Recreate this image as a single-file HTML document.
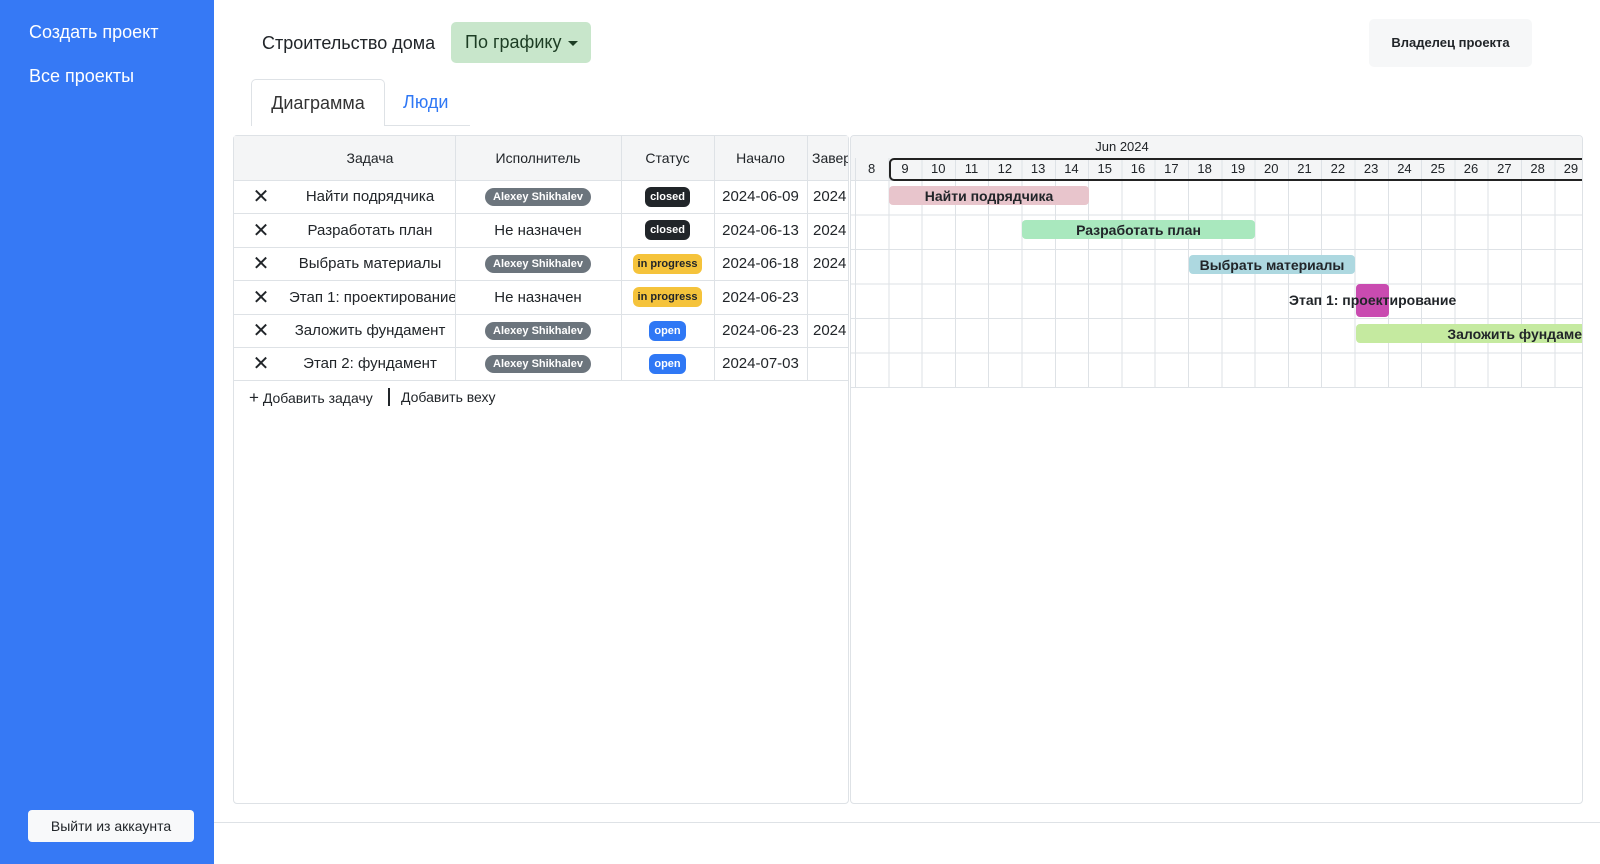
<!DOCTYPE html>
<html><head><meta charset="utf-8"><style>
*{box-sizing:border-box;margin:0;padding:0}
body{width:1600px;height:864px;position:relative;background:#fff;font-family:"Liberation Sans","Noto Sans CJK SC",sans-serif;color:#212529;overflow:hidden}
.abs{position:absolute}
.side{left:0;top:0;width:214px;height:864px;background:#3679f5}
.side a{position:absolute;left:29px;color:#fff;font-size:18px}
.logout{left:28px;top:810px;width:166px;height:32px;background:#f8f9fa;border-radius:4px;font-size:14px;text-align:center;line-height:32px;color:#212529}
.t{position:absolute;display:flex;align-items:center;justify-content:center;font-size:15px;white-space:nowrap;overflow:hidden}
.b{font-size:11px;font-weight:bold;color:#fff;border-radius:6px;padding:4px 5px;line-height:12px}
.gray{background:#6c757d;border-radius:9px;padding:3px 8px}
.dark{background:#212529}
.warn{background:#f5c33b;color:#212529}
.blue{background:#2f78f5}
.hl{position:absolute;height:1px;background:#dee2e6}
.vl{position:absolute;width:1px;background:#dee2e6}
.bar{position:absolute;height:19px;border-radius:4px;font-size:14px;font-weight:bold;display:flex;align-items:center;justify-content:center;white-space:nowrap;overflow:hidden}
.day{position:absolute;top:158px;height:22px;width:33.3px;text-align:center;font-size:13px;line-height:22px}
</style></head><body>
<div class="abs side">
<a style="top:22px">Создать проект</a>
<a style="top:66px">Все проекты</a>
<div class="abs logout">Выйти из аккаунта</div>
</div>
<div class="hl" style="left:214px;top:822px;width:1386px"></div>

<div class="abs" style="left:262px;top:33px;font-size:18px">Строительство дома</div>
<div class="abs" style="left:451px;top:22px;width:140px;height:41px;background:#c8e6cb;border-radius:5px;font-size:18px;color:#1d3d24;line-height:41px;padding-left:14px">По графику <span style="display:inline-block;border-left:5px solid transparent;border-right:5px solid transparent;border-top:5px solid #1d3d24;vertical-align:middle;margin-left:2px"></span></div>
<div class="abs" style="left:1369px;top:19px;width:163px;height:48px;background:#f6f7f8;border-radius:5px;font-size:13px;font-weight:bold;text-align:center;line-height:48px">Владелец проекта</div>

<div class="abs" style="left:251px;top:79px;width:134px;height:47px;border:1px solid #dee2e6;border-bottom:none;border-radius:5px 5px 0 0;background:#fff;font-size:18px;text-align:center;line-height:46px;color:#333">Диаграмма</div>
<div class="abs" style="left:403px;top:92px;font-size:18px;color:#2f78f5">Люди</div>
<div class="hl" style="left:385px;top:125px;width:85px"></div>

<div class="abs" style="left:233px;top:135px;width:616px;height:669px;border:1px solid #dee2e6;border-radius:4px"></div>
<div class="abs" style="left:234px;top:136px;width:614px;height:44px;background:#f4f5f6"></div>
<div class="vl" style="left:455px;top:136px;height:244px"></div>
<div class="vl" style="left:621px;top:136px;height:244px"></div>
<div class="vl" style="left:714px;top:136px;height:244px"></div>
<div class="vl" style="left:807px;top:136px;height:244px"></div>
<div class="t" style="left:285px;top:136px;width:170px;height:44px;font-size:14px">Задача</div>
<div class="t" style="left:455px;top:136px;width:166px;height:44px;font-size:14px">Исполнитель</div>
<div class="t" style="left:621px;top:136px;width:93px;height:44px;font-size:14px">Статус</div>
<div class="t" style="left:714px;top:136px;width:93px;height:44px;font-size:14px">Начало</div>
<div class="t" style="left:812px;top:136px;width:36px;height:44px;font-size:14px;justify-content:flex-start">Завершение</div>

<div class="hl" style="left:234px;top:180px;width:614px"></div>
<div class="hl" style="left:234px;top:213px;width:614px"></div>
<div class="hl" style="left:234px;top:247px;width:614px"></div>
<div class="hl" style="left:234px;top:280px;width:614px"></div>
<div class="hl" style="left:234px;top:314px;width:614px"></div>
<div class="hl" style="left:234px;top:347px;width:614px"></div>
<div class="hl" style="left:234px;top:380px;width:614px"></div>

<div class="t" style="left:245px;top:180px;width:32px;height:33px;font-size:20px">✕</div>
<div class="t" style="left:285px;top:180px;width:170px;height:33px">Найти подрядчика</div>
<div class="t" style="left:455px;top:180px;width:166px;height:33px"><span class="b gray">Alexey Shikhalev</span></div>
<div class="t" style="left:621px;top:180px;width:93px;height:33px"><span class="b dark">closed</span></div>
<div class="t" style="left:714px;top:180px;width:93px;height:33px">2024-06-09</div>
<div class="t" style="left:813px;top:180px;width:35px;height:33px;justify-content:flex-start">2024</div>

<div class="t" style="left:245px;top:213px;width:32px;height:34px;font-size:20px">✕</div>
<div class="t" style="left:285px;top:213px;width:170px;height:34px">Разработать план</div>
<div class="t" style="left:455px;top:213px;width:166px;height:34px">Не назначен</div>
<div class="t" style="left:621px;top:213px;width:93px;height:34px"><span class="b dark">closed</span></div>
<div class="t" style="left:714px;top:213px;width:93px;height:34px">2024-06-13</div>
<div class="t" style="left:813px;top:213px;width:35px;height:34px;justify-content:flex-start">2024</div>

<div class="t" style="left:245px;top:247px;width:32px;height:33px;font-size:20px">✕</div>
<div class="t" style="left:285px;top:247px;width:170px;height:33px">Выбрать материалы</div>
<div class="t" style="left:455px;top:247px;width:166px;height:33px"><span class="b gray">Alexey Shikhalev</span></div>
<div class="t" style="left:621px;top:247px;width:93px;height:33px"><span class="b warn">in progress</span></div>
<div class="t" style="left:714px;top:247px;width:93px;height:33px">2024-06-18</div>
<div class="t" style="left:813px;top:247px;width:35px;height:33px;justify-content:flex-start">2024</div>

<div class="t" style="left:245px;top:280px;width:32px;height:34px;font-size:20px">✕</div>
<div class="t" style="left:289px;top:280px;width:166px;height:34px;justify-content:flex-start">Этап 1: проектирование</div>
<div class="t" style="left:455px;top:280px;width:166px;height:34px">Не назначен</div>
<div class="t" style="left:621px;top:280px;width:93px;height:34px"><span class="b warn">in progress</span></div>
<div class="t" style="left:714px;top:280px;width:93px;height:34px">2024-06-23</div>

<div class="t" style="left:245px;top:314px;width:32px;height:33px;font-size:20px">✕</div>
<div class="t" style="left:285px;top:314px;width:170px;height:33px">Заложить фундамент</div>
<div class="t" style="left:455px;top:314px;width:166px;height:33px"><span class="b gray">Alexey Shikhalev</span></div>
<div class="t" style="left:621px;top:314px;width:93px;height:33px"><span class="b blue">open</span></div>
<div class="t" style="left:714px;top:314px;width:93px;height:33px">2024-06-23</div>
<div class="t" style="left:813px;top:314px;width:35px;height:33px;justify-content:flex-start">2024</div>

<div class="t" style="left:245px;top:347px;width:32px;height:33px;font-size:20px">✕</div>
<div class="t" style="left:285px;top:347px;width:170px;height:33px">Этап 2: фундамент</div>
<div class="t" style="left:455px;top:347px;width:166px;height:33px"><span class="b gray">Alexey Shikhalev</span></div>
<div class="t" style="left:621px;top:347px;width:93px;height:33px"><span class="b blue">open</span></div>
<div class="t" style="left:714px;top:347px;width:93px;height:33px">2024-07-03</div>

<div class="abs" style="left:249px;top:388px;font-size:14px"><span style="font-size:17px">+</span> Добавить задачу</div>
<div class="abs" style="left:388px;top:388px;width:2px;height:18px;background:#212529"></div>
<div class="abs" style="left:401px;top:389px;font-size:14px">Добавить веху</div>

<div class="abs" style="left:850px;top:135px;width:733px;height:669px;border:1px solid #dee2e6;border-radius:4px;overflow:hidden">
 <div class="abs" style="left:0;top:0;width:733px;height:45px;background:#f4f5f6"></div>
 <div class="abs" style="left:4px;top:22px;width:729px;height:230px;background:repeating-linear-gradient(90deg,#dee2e6 0 1px,transparent 1px 33.3px)"></div>
 <div class="abs" style="left:0;top:44px;width:733px;height:208px;background:repeating-linear-gradient(180deg,#dee2e6 0 1px,transparent 1px 34.5px)"></div>
 <div class="abs" style="left:0;top:251px;width:733px;height:1px;background:#dee2e6"></div>
 <div class="abs" style="left:38px;top:22px;width:700px;height:23px;border:2px solid #222;border-radius:5px"></div>
 <div class="abs" style="left:221px;top:1px;width:100px;text-align:center;font-size:13px;line-height:20px">Jun 2024</div>
</div>
<div class="day" style="left:855px">8</div><div class="day" style="left:888.3px">9</div><div class="day" style="left:921.6px">10</div><div class="day" style="left:954.9px">11</div><div class="day" style="left:988.2px">12</div><div class="day" style="left:1021.5px">13</div><div class="day" style="left:1054.8px">14</div><div class="day" style="left:1088.1px">15</div><div class="day" style="left:1121.4px">16</div><div class="day" style="left:1154.7px">17</div><div class="day" style="left:1188px">18</div><div class="day" style="left:1221.3px">19</div><div class="day" style="left:1254.6px">20</div><div class="day" style="left:1287.9px">21</div><div class="day" style="left:1321.2px">22</div><div class="day" style="left:1354.5px">23</div><div class="day" style="left:1387.8px">24</div><div class="day" style="left:1421.1px">25</div><div class="day" style="left:1454.4px">26</div><div class="day" style="left:1487.7px">27</div><div class="day" style="left:1521px">28</div><div class="day" style="left:1554.3px">29</div>

<div class="bar" style="left:889px;top:186px;width:200px;background:#e8c5cc">Найти подрядчика</div>
<div class="bar" style="left:1022px;top:220px;width:233px;background:#a9e8be">Разработать план</div>
<div class="bar" style="left:1189px;top:255px;width:166px;background:#add8e0">Выбрать материалы</div>
<div class="abs" style="left:1356px;top:284px;width:33px;height:33px;border-radius:4px;background:#c94bb0"></div>
<div class="abs" style="left:1289px;top:292px;font-size:14px;font-weight:bold;white-space:nowrap">Этап 1: проектирование</div>
<div class="bar" style="left:1356px;top:324px;width:226px;background:#c5eaa0;border-radius:4px 0 0 4px;justify-content:flex-end">Заложить фундаме</div>
</body></html>
